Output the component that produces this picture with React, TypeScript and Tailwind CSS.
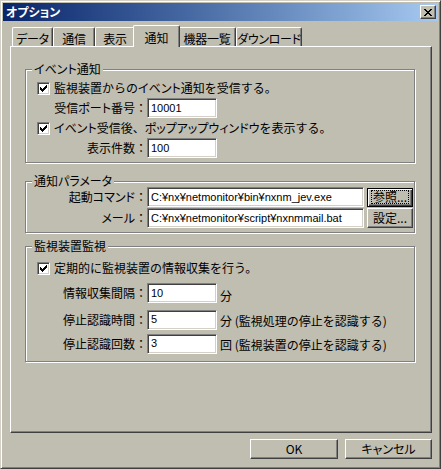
import type { ReactNode } from "react";

const sunken =
  "bg-white border border-t-[#808080] border-l-[#808080] border-r-white border-b-white shadow-[inset_1px_1px_0_#404040,inset_-1px_-1px_0_#d4d0c8]";
const raised =
  "border border-t-white border-l-white border-r-[#404040] border-b-[#404040] shadow-[inset_-1px_-1px_0_#808080]";

// katakana runs get proportional widths, like the old UI font
function J({ t }: { t: string }) {
  const parts = t.split(/([ァ-ヶー]+)/);
  return (
    <>
      {parts.map((p, i) =>
        i % 2 ? (
          <span key={i} className="[font-feature-settings:'palt']">
            {p}
          </span>
        ) : (
          p
        )
      )}
    </>
  );
}

function CheckBox() {
  const ys = [2, 3, 4, 3, 2, 1, 0];
  return (
    <span className={`w-[13px] h-[13px] shrink-0 flex items-center justify-center ${sunken}`}>
      <svg width="7" height="7" viewBox="0 0 7 7" shapeRendering="crispEdges">
        {ys.map((y, i) => (
          <rect key={i} x={i} y={y} width="1" height="3" fill="#000" />
        ))}
      </svg>
    </span>
  );
}

function CheckRow({ label }: { label: string }) {
  return (
    <div className="h-[16px] flex items-center gap-[4px] whitespace-nowrap">
      <CheckBox />
      <span>
        <J t={label} />
      </span>
    </div>
  );
}

function Field({ value, w }: { value: string; w: string }) {
  return (
    <div
      className={`h-[20px] ${w} flex items-center pl-[3px] font-['Liberation_Sans',sans-serif] text-[11px] whitespace-nowrap ${sunken}`}
    >
      {value}
    </div>
  );
}

function Group({ title, className, children }: { title: string; className: string; children: ReactNode }) {
  return (
    <div
      className={`relative border border-[#808080] shadow-[inset_1px_1px_0_#fff,1px_1px_0_#fff] pl-[11px] ${className}`}
    >
      <span className="absolute left-[6px] -top-[8px] px-[2px] bg-[#c0bdb1] leading-[14px]">
        <J t={title} />
      </span>
      {children}
    </div>
  );
}

function Label({ text }: { text: string }) {
  return (
    <span className="w-[110px] text-right shrink-0 whitespace-nowrap">
      <J t={text} />：
    </span>
  );
}

const tabs = [
  { name: "データ", w: "w-[41px]" },
  { name: "通信", w: "w-[42px]" },
  { name: "表示", w: "w-[40px]" },
  { name: "通知", w: "w-[47px]", active: true },
  { name: "機器一覧", w: "w-[58px]" },
  { name: "ダウンロード", w: "w-[66px]" },
];

export default function App() {
  return (
    <div className="w-[441px] h-[469px] bg-[#c0bdb1] border border-t-[#d4d0c8] border-l-[#d4d0c8] border-r-[#404040] border-b-[#404040] shadow-[inset_1px_1px_0_#fff,inset_-1px_-1px_0_#808080] p-[2px] flex flex-col text-[12px] text-black font-['Noto_Sans_CJK_JP',sans-serif]">
      {/* title bar */}
      <div className="h-[18px] shrink-0 flex items-center justify-between pl-[3px] pr-[2px] bg-linear-to-r from-[#0a246a] to-[#a6caf0]">
        <span className="text-white font-bold leading-none [font-feature-settings:'palt']">オプション</span>
        <div className={`w-[16px] h-[14px] bg-[#c0bdb1] flex items-center justify-center ${raised}`}>
          <svg width="8" height="7" viewBox="0 0 8 7" shapeRendering="crispEdges" fill="#000">
            <rect x="0" y="0" width="2" height="1" />
            <rect x="6" y="0" width="2" height="1" />
            <rect x="1" y="1" width="2" height="1" />
            <rect x="5" y="1" width="2" height="1" />
            <rect x="2" y="2" width="4" height="1" />
            <rect x="3" y="3" width="2" height="1" />
            <rect x="2" y="4" width="4" height="1" />
            <rect x="1" y="5" width="2" height="1" />
            <rect x="5" y="5" width="2" height="1" />
            <rect x="0" y="6" width="2" height="1" />
            <rect x="6" y="6" width="2" height="1" />
          </svg>
        </div>
      </div>

      {/* tabs */}
      <div className="ml-[9px] mt-[4px] h-[21px] flex items-end">
        {tabs.map((t) =>
          t.active ? (
            <div
              key={t.name}
              className={`${t.w} h-[22px] -mx-[2px] -mb-[1px] relative z-10 bg-[#c0bdb1] rounded-t-[2px] border-t border-l border-r border-t-white border-l-white border-r-[#404040] shadow-[inset_-1px_0_0_#808080] flex justify-center pt-[3px] whitespace-nowrap`}
            >
              <J t={t.name} />
            </div>
          ) : (
            <div
              key={t.name}
              className={`${t.w} h-[19px] rounded-t-[2px] border-t border-l border-r border-t-white border-l-white border-r-[#404040] shadow-[inset_-1px_0_0_#808080] flex justify-center pt-[2px] whitespace-nowrap tracking-[-0.3px]`}
            >
              <J t={t.name} />
            </div>
          )
        )}
      </div>

      {/* panel */}
      <div className="ml-[7px] w-[422px] h-[387px] shrink-0 border border-t-white border-l-white border-r-[#404040] border-b-[#404040] shadow-[inset_-1px_-1px_0_#808080] pl-[14px] pt-[22px]">
        <Group title="イベント通知" className="w-[390px] pt-[10px] pb-[4px]">
          <CheckRow label="監視装置からのイベント通知を受信する。" />
          <div className="mt-[2px] flex items-center">
            <Label text="受信ポート番号" />
            <Field value="10001" w="w-[70px]" />
          </div>
          <div className="mt-[2px]">
            <CheckRow label="イベント受信後、ポップアップウィンドウを表示する。" />
          </div>
          <div className="mt-[2px] flex items-center">
            <Label text="表示件数" />
            <Field value="100" w="w-[70px]" />
          </div>
        </Group>

        <Group title="通知パラメータ" className="w-[390px] mt-[18px] pt-[5px] pb-[4px]">
          <div className="flex items-center">
            <Label text="起動コマンド" />
            <Field value="C:¥nx¥netmonitor¥bin¥nxnm_jev.exe" w="w-[217px]" />
            <div className="ml-[3px] w-[46px] h-[19px] border border-black flex">
              <div className="flex-1 flex items-center justify-center shadow-[inset_1px_1px_0_#fff,inset_-1px_-1px_0_#404040,inset_-2px_-2px_0_#808080]">
                <span className="border border-dotted border-black px-[1px] leading-[12px]">参照...</span>
              </div>
            </div>
          </div>
          <div className="mt-[1px] flex items-center">
            <Label text="メール" />
            <Field value="C:¥nx¥netmonitor¥script¥nxnmmail.bat" w="w-[217px]" />
            <div className={`ml-[3px] w-[46px] h-[20px] flex items-center justify-center ${raised}`}>設定...</div>
          </div>
        </Group>

        <Group title="監視装置監視" className="w-[390px] mt-[13px] pt-[13px] pb-[7px]">
          <CheckRow label="定期的に監視装置の情報収集を行う。" />
          <div className="mt-[5px] flex items-center">
            <Label text="情報収集間隔" />
            <Field value="10" w="w-[70px]" />
            <span className="ml-[3px] pt-[6px]">分</span>
          </div>
          <div className="mt-[4px] flex items-center">
            <Label text="停止認識時間" />
            <Field value="5" w="w-[70px]" />
            <span className="ml-[3px] pt-[3px]">分 (監視処理の停止を認識する)</span>
          </div>
          <div className="mt-[3px] flex items-center">
            <Label text="停止認識回数" />
            <Field value="3" w="w-[70px]" />
            <span className="ml-[3px] pt-[3px]">回 (監視装置の停止を認識する)</span>
          </div>
        </Group>
      </div>

      {/* buttons */}
      <div className="ml-[7px] w-[422px] mt-[6px] flex justify-end gap-[7px]">
        <div className={`w-[88px] h-[20px] flex items-center justify-center ${raised}`}>OK</div>
        <div className={`w-[87px] h-[20px] flex items-center justify-center ${raised}`}>
          <J t="キャンセル" />
        </div>
      </div>
    </div>
  );
}
